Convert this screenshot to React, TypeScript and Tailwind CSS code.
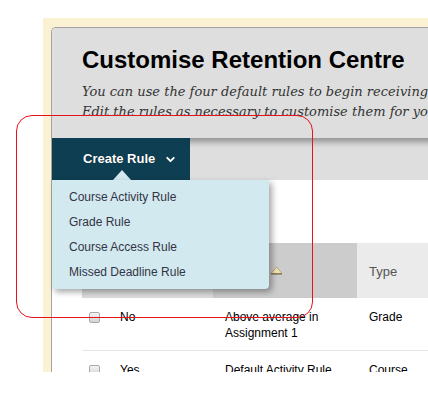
import { ChevronDown } from "lucide-react";

const menuItems = ["Course Activity Rule", "Grade Rule", "Course Access Rule", "Missed Deadline Rule"];

const rows = [
    { label: "No", name: ["Above average in", "Assignment 1"], type: "Grade" },
    { label: "Yes", name: ["Default Activity Rule"], type: "Course" },
];

function Checkbox() {
    return (
        <span className="block w-[11px] h-[11px] rounded-[2px] border border-[#a9a9a9] bg-gradient-to-b from-[#f4f4f4] to-[#d4d4d4]" />
    );
}

export default function App() {
    return (
        <div className="relative w-[428px] h-[398px] bg-white overflow-hidden font-['Liberation_Sans',Arial,sans-serif]">
            <div className="pt-[18px] pl-[43px]">
                <div className="h-[354px] bg-[#fbf2d4] pl-[8px] pt-[9px] overflow-hidden">
                    <div className="bg-white border-l border-t border-[#a3a3a3] rounded-tl-[5px] flex flex-col w-[420px] min-h-[345px]">
                        {/* page header */}
                        <div className="shrink-0 h-[110px] bg-[#dedede] rounded-tl-[4px] pl-[30px] pt-[18px] whitespace-nowrap">
                            <h1 className="text-[24px] leading-[28px] font-bold text-black">Customise Retention Centre</h1>
                            <p className="mt-[8px] text-[13px] leading-[20px] italic text-[#333] font-['DejaVu_Serif',Georgia,serif]">
                                You can use the four default rules to begin receiving alerts.
                                <br />
                                Edit the rules as necessary to customise them for your course.
                            </p>
                        </div>

                        {/* action bar */}
                        <div className="shrink-0 relative h-[42px] flex bg-[#dedede] shadow-[inset_0_7px_6px_-3px_rgba(0,0,0,0.35)] z-10">
                            <div className="relative w-[138px] h-full bg-[#0e3e51] flex items-center pl-[31px] text-white text-[13px] font-bold">
                                <span className="[text-shadow:0_0_1px_rgba(0,0,0,0.6)]">Create Rule</span>
                                <ChevronDown size={13} strokeWidth={3.5} className="ml-[9px]" />
                                <span className="absolute left-[61px] bottom-0 w-0 h-0 border-l-[9px] border-r-[9px] border-b-[10px] border-l-transparent border-r-transparent border-b-[#d2e9ef]" />
                                <ul className="absolute left-0 top-full w-[217px] h-[109px] bg-[#d2e9ef] rounded-br-[4px] shadow-[3px_3px_6px_rgba(0,0,0,0.35)] pt-[5px] pl-[17px] text-[12px] font-normal text-[#343446] [text-shadow:none]">
                                    {menuItems.map((item) => (
                                        <li key={item} className="h-[25px] leading-[25px]">{item}</li>
                                    ))}
                                </ul>
                            </div>
                        </div>

                        {/* table */}
                        <div className="shrink-0 pl-[30px] pt-[63px]">
                            <div className="flex h-[55px] text-[12px] text-[#555]">
                                <div className="w-[131px] bg-[#dcdcdc]" />
                                <div className="w-[144px] bg-[#cccccc] flex items-center pl-[12px]">
                                    <span className="w-[45px] text-[#333]">Name</span>
                                    <svg width="13" height="9" viewBox="0 0 13 9" className="mt-[-1px]">
                                        <path d="M6.5 1 L12 7.5 L1 7.5 Z" fill="#f2e2b6" stroke="#b8a67a" strokeWidth="1" />
                                        <path d="M1 8 L12 8" stroke="#6a5c3a" strokeWidth="1" />
                                    </svg>
                                </div>
                                <div className="flex-1 bg-[#ebebeb] flex items-center pl-[12px] pt-[2px] text-[13px]">Type</div>
                            </div>
                            {rows.map((r) => (
                                <div key={r.label} className="flex h-[53px] border-b border-[#e6e6e6] text-[12px] leading-[16px] text-black">
                                    <div className="w-[26px] pl-[7px] pt-[14px]">
                                        <Checkbox />
                                    </div>
                                    <div className="w-[105px] pl-[12px] pt-[11px]">{r.label}</div>
                                    <div className="w-[144px] pl-[12px] pt-[11px]">
                                        {r.name.map((n) => (
                                            <div key={n}>{n}</div>
                                        ))}
                                    </div>
                                    <div className="flex-1 pl-[12px] pt-[11px]">{r.type}</div>
                                </div>
                            ))}
                        </div>
                    </div>
                </div>
            </div>

            {/* red annotation */}
            <div className="absolute left-[16px] top-[115px] w-[297px] h-[203px] border border-[#e3121b] rounded-[16px] pointer-events-none z-20" />
        </div>
    );
}
